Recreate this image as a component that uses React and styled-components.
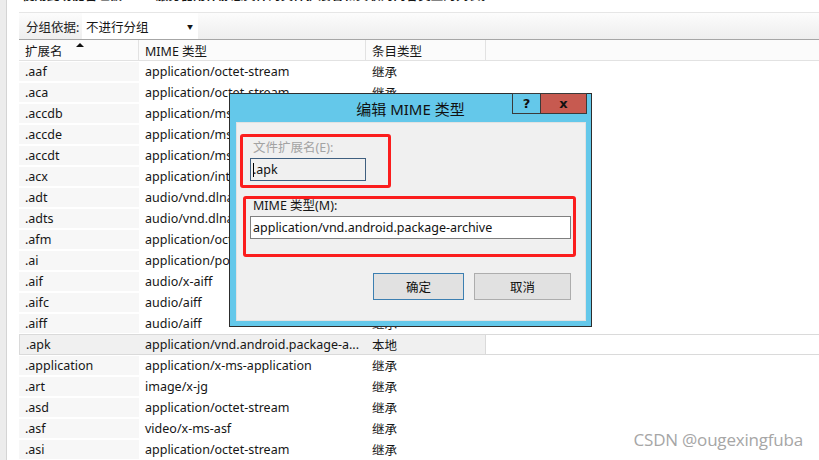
import React from "react";
import styled, { createGlobalStyle } from "styled-components";

const GlobalStyle = createGlobalStyle`
  html, body {
    margin: 0;
    padding: 0;
    background: #fff;
  }
  body {
    width: 819px;
    height: 460px;
    overflow: hidden;
    font-family: "Noto Sans", "Noto Sans CJK SC", sans-serif;
    font-size: 12.5px;
    color: #161616;
  }
`;

const Page = styled.div`
  position: relative;
  display: flex;
  width: 819px;
  height: 460px;
  overflow: hidden;
`;

const SideStrip = styled.div`
  width: 6px;
  flex: none;
  background: #ececec;
  border-right: 1px solid #d4d4d4;
  margin-right: 12px;
`;

const Main = styled.div`
  flex: 1;
  display: flex;
  flex-direction: column;
  min-width: 0;
`;

const CutText = styled.div`
  height: 12px;
  overflow: hidden;
  padding-left: 3px;
  white-space: nowrap;
  font-weight: bold;
  line-height: 14px;
  span {
    display: block;
    margin-top: -11px;
  }
`;

const Toolbar = styled.div`
  height: 26px;
  display: flex;
  align-items: stretch;
  border-top: 1px solid #e6e6e6;
  border-bottom: 1px solid #a6a6a6;
  background: linear-gradient(#fcfcfc, #eeeeee);
`;

const ToolLabel = styled.div`
  display: flex;
  align-items: center;
  padding-left: 7px;
  width: 56px;
  color: #222;
`;

const Dropdown = styled.div`
  width: 116px;
  background: #fff;
  display: flex;
  align-items: center;
  padding-left: 4px;
  box-sizing: border-box;
  span {
    flex: 1;
  }
  i {
    font-style: normal;
    font-size: 6px;
    margin-right: 5px;
  }
`;

const Grid = styled.div`
  display: grid;
  grid-template-columns: 120px 227px 120px 1fr;
`;

const HeaderRow = styled(Grid)`
  height: 20px;
  background: #fbfbfb;
  border-bottom: 1px solid #e2e2e2;
`;

const HeadCell = styled.div`
  position: relative;
  display: flex;
  align-items: center;
  padding-left: 6px;
  border-right: ${(p) => (p.$last ? "none" : "1px solid #e2e2e2")};
`;

const SortArrow = styled.div`
  position: absolute;
  top: 3px;
  left: 57px;
  width: 0;
  height: 0;
  border-left: 4px solid transparent;
  border-right: 4px solid transparent;
  border-bottom: 4px solid #111;
`;

const Row = styled(Grid)`
  height: 21px;
  box-sizing: border-box;
  border-top: 1px solid ${(p) => (p.$selected ? "#dadada" : "transparent")};
  border-bottom: 1px solid ${(p) => (p.$selected ? "#dadada" : "transparent")};
  background: ${(p) =>
    p.$selected ? "linear-gradient(90deg, #f0f0f0 467px, #fff 467px)" : "none"};
`;

const Cell = styled.div`
  display: flex;
  align-items: center;
  padding-left: 6px;
  white-space: nowrap;
  overflow: hidden;
  background: ${(p) => (p.$sorted ? "#f7f7f7" : "transparent")};
  border-left: ${(p) => (p.$edge ? "1px solid #dadada" : "none")};
  border-right: ${(p) => (p.$edgeR ? "1px solid #dadada" : "none")};
`;

/* dialog */

const Dialog = styled.div`
  position: absolute;
  left: 229px;
  top: 93px;
  width: 363px;
  height: 234px;
  box-sizing: border-box;
  border: 1px solid #2d2d2d;
  background: #64c8ea;
  display: flex;
  flex-direction: column;
`;

const TitleBar = styled.div`
  height: 28px;
  display: grid;
  grid-template-columns: 1fr auto 1fr;
  align-items: start;
`;

const Title = styled.div`
  grid-column: 2;
  font-size: 15px;
  line-height: 28px;
  color: #111;
  padding-top: 1px;
`;

const Controls = styled.div`
  grid-column: 3;
  justify-self: end;
  display: flex;
  margin-right: 4px;
  margin-top: -1px;
`;

const CtrlBtn = styled.div`
  height: 21px;
  width: ${(p) => p.$w}px;
  box-sizing: border-box;
  border: 1px solid #3a3a3a;
  border-left: ${(p) => (p.$joined ? "none" : "1px solid #3a3a3a")};
  background: ${(p) => p.$bg};
  display: flex;
  align-items: center;
  justify-content: center;
  font-family: "DejaVu Sans", sans-serif;
  font-weight: bold;
  font-size: 13px;
  color: #111;
`;

const Client = styled.div`
  flex: 1;
  margin: 0 5px 5px 6px;
  background: #f0f0f0;
  border: 1px solid #e2e2e2;
  display: flex;
  flex-direction: column;
`;

const RedBox = styled.div`
  box-sizing: border-box;
  border: 3px solid #fb1d1d;
  border-radius: 3px;
  width: ${(p) => p.$w}px;
  height: ${(p) => p.$h}px;
  margin-left: ${(p) => p.$ml}px;
  margin-top: ${(p) => p.$mt}px;
  display: flex;
  flex-direction: column;
`;

const FieldLabel = styled.div`
  color: ${(p) => (p.$disabled ? "#a3a3a3" : "#161616")};
  margin-left: ${(p) => p.$ml}px;
  margin-top: ${(p) => p.$mt}px;
  line-height: 14px;
`;

const TextInput = styled.div`
  box-sizing: border-box;
  width: ${(p) => p.$w}px;
  height: 23px;
  margin-left: ${(p) => p.$ml}px;
  margin-top: ${(p) => p.$mt}px;
  border: 1px solid ${(p) => (p.$disabled ? "#3f5f7f" : "#7f7f7f")};
  background: ${(p) => (p.$disabled ? "#f0f0f0" : "#fff")};
  display: flex;
  align-items: center;
  padding-left: 2px;
  color: #111;
  white-space: nowrap;
`;

const Caret = styled.span`
  display: inline-block;
  width: 1px;
  height: 14px;
  background: #000;
  margin-right: -1px;
`;

const ButtonRow = styled.div`
  display: flex;
  justify-content: flex-end;
  gap: 10px;
  margin-top: 16px;
  margin-right: 14px;
`;

const DlgButton = styled.div`
  box-sizing: border-box;
  width: ${(p) => p.$w}px;
  height: 27px;
  border: 1px solid ${(p) => (p.$primary ? "#3c7fb1" : "#adadad")};
  background: #e1e1e1;
  display: flex;
  align-items: center;
  justify-content: center;
  color: #111;
`;

const Watermark = styled.div`
  position: absolute;
  right: 16px;
  bottom: 9px;
  font-family: "Open Sans", sans-serif;
  font-size: 17px;
  color: #a6a6a6;
  letter-spacing: -0.2px;
`;

const rows = [
  [".aaf", "application/octet-stream", "继承"],
  [".aca", "application/octet-stream", "继承"],
  [".accdb", "application/msaccess", "继承"],
  [".accde", "application/msaccess", "继承"],
  [".accdt", "application/msaccess", "继承"],
  [".acx", "application/internet-property-stream", "继承"],
  [".adt", "audio/vnd.dlna.adts", "继承"],
  [".adts", "audio/vnd.dlna.adts", "继承"],
  [".afm", "application/octet-stream", "继承"],
  [".ai", "application/postscript", "继承"],
  [".aif", "audio/x-aiff", "继承"],
  [".aifc", "audio/aiff", "继承"],
  [".aiff", "audio/aiff", "继承"],
  [".apk", "application/vnd.android.package-a...", "本地"],
  [".application", "application/x-ms-application", "继承"],
  [".art", "image/x-jg", "继承"],
  [".asd", "application/octet-stream", "继承"],
  [".asf", "video/x-ms-asf", "继承"],
  [".asi", "application/octet-stream", "继承"],
];

export default function App() {
  return (
    <>
      <GlobalStyle />
      <Page>
        <SideStrip />
        <Main>
          <CutText>
            <span>使用此功能管理被 Web 服务器用作静态文件的文件扩展名和关联的内容类型的列表。</span>
          </CutText>
          <Toolbar>
            <ToolLabel>分组依据:</ToolLabel>
            <Dropdown>
              <span>不进行分组</span>
              <i>▼</i>
            </Dropdown>
          </Toolbar>
          <HeaderRow>
            <HeadCell>
              扩展名
              <SortArrow />
            </HeadCell>
            <HeadCell>MIME 类型</HeadCell>
            <HeadCell>条目类型</HeadCell>
            <HeadCell $last />
          </HeaderRow>
          {rows.map(([ext, mime, kind]) => {
            const sel = ext === ".apk";
            return (
              <Row key={ext} $selected={sel}>
                <Cell $sorted={!sel} $edge={sel}>{ext}</Cell>
                <Cell>{mime}</Cell>
                <Cell $edgeR={sel}>{kind}</Cell>
                <Cell />
              </Row>
            );
          })}
        </Main>

        <Dialog>
          <TitleBar>
            <Title>编辑 MIME 类型</Title>
            <Controls>
              <CtrlBtn $w={29} $bg="#64c8ea">?</CtrlBtn>
              <CtrlBtn $w={46} $bg="#c75a50" $joined>x</CtrlBtn>
            </Controls>
          </TitleBar>
          <Client>
            <RedBox $w={151} $h={54} $ml={3} $mt={11}>
              <FieldLabel $disabled $ml={10} $mt={4}>文件扩展名(E):</FieldLabel>
              <TextInput $disabled $w={116} $ml={7} $mt={3}>
                <Caret />.apk
              </TextInput>
            </RedBox>
            <RedBox $w={333} $h={61} $ml={6} $mt={8}>
              <FieldLabel $ml={7} $mt={0}>MIME 类型(M):</FieldLabel>
              <TextInput $w={321} $ml={4} $mt={3}>
                application/vnd.android.package-archive
              </TextInput>
            </RedBox>
            <ButtonRow>
              <DlgButton $primary $w={91}>确定</DlgButton>
              <DlgButton $w={97}>取消</DlgButton>
            </ButtonRow>
          </Client>
        </Dialog>

        <Watermark>CSDN @ougexingfuba</Watermark>
      </Page>
    </>
  );
}
